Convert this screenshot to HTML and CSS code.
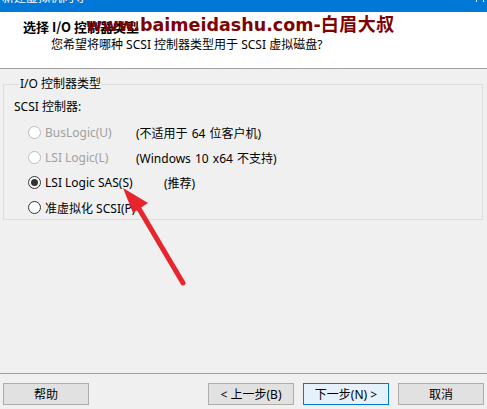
FILE: index.html
```html
<!DOCTYPE html>
<html lang="zh">
<head>
<meta charset="utf-8">
<title>新建虚拟机向导</title>
<link rel="stylesheet" href="styles.css">
</head>
<body>
<div class="window">
  <div class="titlebar"><span class="title-text">新建虚拟机向导</span><span class="close-mark"></span></div>
  <div class="header">
    <div class="h-title">选择 I/O 控制器类型</div>
    <div class="h-sub">您希望将哪种 SCSI 控制器类型用于 SCSI 虚拟磁盘?</div>
    <div class="watermark">www.baimeidashu.com-<span class="wm-cn">白眉大叔</span></div>
  </div>
  <div class="main">
    <fieldset class="group">
      <legend>I/O 控制器类型</legend>
      <div class="sub-label">SCSI 控制器:</div>
      <div class="options">
        <div class="opt disabled"><span class="radio"></span><span>BusLogic(U)</span></div>
        <div class="note">(不适用于 64 位客户机)</div>
        <div class="opt disabled"><span class="radio"></span><span>LSI Logic(L)</span></div>
        <div class="note">(Windows 10 x64 不支持)</div>
        <div class="opt"><span class="radio checked"></span><span>LSI Logic SAS(S)</span></div>
        <div class="note note-rec">(推荐)</div>
        <div class="opt"><span class="radio"></span><span>准虚拟化 SCSI(P)</span></div>
        <div class="note"></div>
      </div>
    </fieldset>
    <svg class="arrow" width="80" height="110" viewBox="0 0 80 110">
      <line x1="65" y1="100" x2="20" y2="24" stroke="#e8242c" stroke-width="5" stroke-linecap="round"/>
      <polygon points="5,5 30,20 15,30" fill="#e8242c"/>
    </svg>
  </div>
  <div class="footer">
    <button class="btn">帮助</button>
    <div class="spacer"></div>
    <button class="btn">&lt; 上一步(B)</button>
    <button class="btn default">下一步(N) &gt;</button>
    <button class="btn">取消</button>
  </div>
</div>
</body>
</html>
```
FILE: styles.css
```css
html, body {
  margin: 0;
  padding: 0;
}
body {
  background: #f0f0f0;
  font-family: "Noto Sans", "Noto Sans CJK SC", sans-serif;
  font-size: 12px;
  color: #000;
}
.window {
  width: 487px;
  height: 409px;
  display: flex;
  flex-direction: column;
  position: relative;
  overflow: hidden;
}
.titlebar {
  height: 12px;
  background: #0078d7;
  overflow: hidden;
  position: relative;
  flex: none;
}
.title-text {
  display: block;
  color: #fff;
  font-size: 12px;
  line-height: 12px;
  margin-top: -8px;
  margin-left: 2px;
}
.close-mark {
  position: absolute;
  right: 3px;
  top: 0;
  width: 6px;
  height: 2px;
  border-left: 1px solid #fff;
  border-right: 1px solid #fff;
}
.header {
  height: 56px;
  background: #fff;
  border-bottom: 1px solid #a0a0a0;
  position: relative;
  flex: none;
}
.h-title {
  font-weight: bold;
  font-size: 13px;
  line-height: 16px;
  padding: 7px 0 0 23px;
  font-family: "Noto Sans CJK SC", "Liberation Serif", serif;
}
.h-sub {
  line-height: 16px;
  padding: 2px 0 0 51px;
}
.watermark {
  position: absolute;
  left: 86px;
  top: -1px;
  font-family: "DejaVu Sans", sans-serif;
  font-weight: bold;
  font-size: 17.5px;
  line-height: 24px;
  color: #7d0202;
  white-space: nowrap;
}
.wm-cn {
  font-family: "Noto Sans CJK SC", sans-serif;
  font-size: 18px;
  letter-spacing: 0.5px;
}
.main {
  flex: 1;
  position: relative;
}
.group {
  margin: 7px 4px 0 3px;
  padding: 7px 0 4px 9px;
  border: 1px solid #dcdcdc;
  height: 144px;
  box-sizing: border-box;
  min-width: 0;
}
.group legend {
  padding: 0 1px;
  margin-left: 6px;
  line-height: 16px;
}
.sub-label {
  line-height: 16px;
  margin-left: 1px;
}
.options {
  display: grid;
  grid-template-columns: 108px auto;
  grid-auto-rows: 25px;
  margin-top: 5px;
  margin-left: 15px;
  align-items: center;
}
.opt {
  display: flex;
  align-items: center;
  gap: 4px;
}
.opt.disabled {
  color: #a0a0a0;
}
.note {
  word-spacing: 1px;
}
.radio {
  width: 11px;
  height: 11px;
  border: 1px solid #333;
  border-radius: 50%;
  background: #fff;
  display: inline-block;
  position: relative;
  flex: none;
}
.opt.disabled .radio {
  border-color: #bcbcbc;
}
.radio.checked::after {
  content: "";
  position: absolute;
  left: 2px;
  top: 2px;
  width: 7px;
  height: 7px;
  border-radius: 50%;
  background: #333;
}
.note-rec {
  margin-left: 28px;
}
.arrow {
  position: absolute;
  left: 118px;
  top: 114px;
}
.footer {
  flex: none;
  border-top: 1px solid #a0a0a0;
  display: flex;
  padding: 9px 3px 4px 3px;
  gap: 9px;
}
.spacer {
  flex: 1;
}
.btn {
  width: 86px;
  height: 22px;
  background: #e1e1e1;
  border: 1px solid #adadad;
  font-family: "Noto Sans", "Noto Sans CJK SC", sans-serif;
  font-size: 12px;
  color: #000;
  padding: 0;
  margin: 0;
}
.btn.default {
  background: #e5f1fb;
  border-color: #0078d7;
}
```
